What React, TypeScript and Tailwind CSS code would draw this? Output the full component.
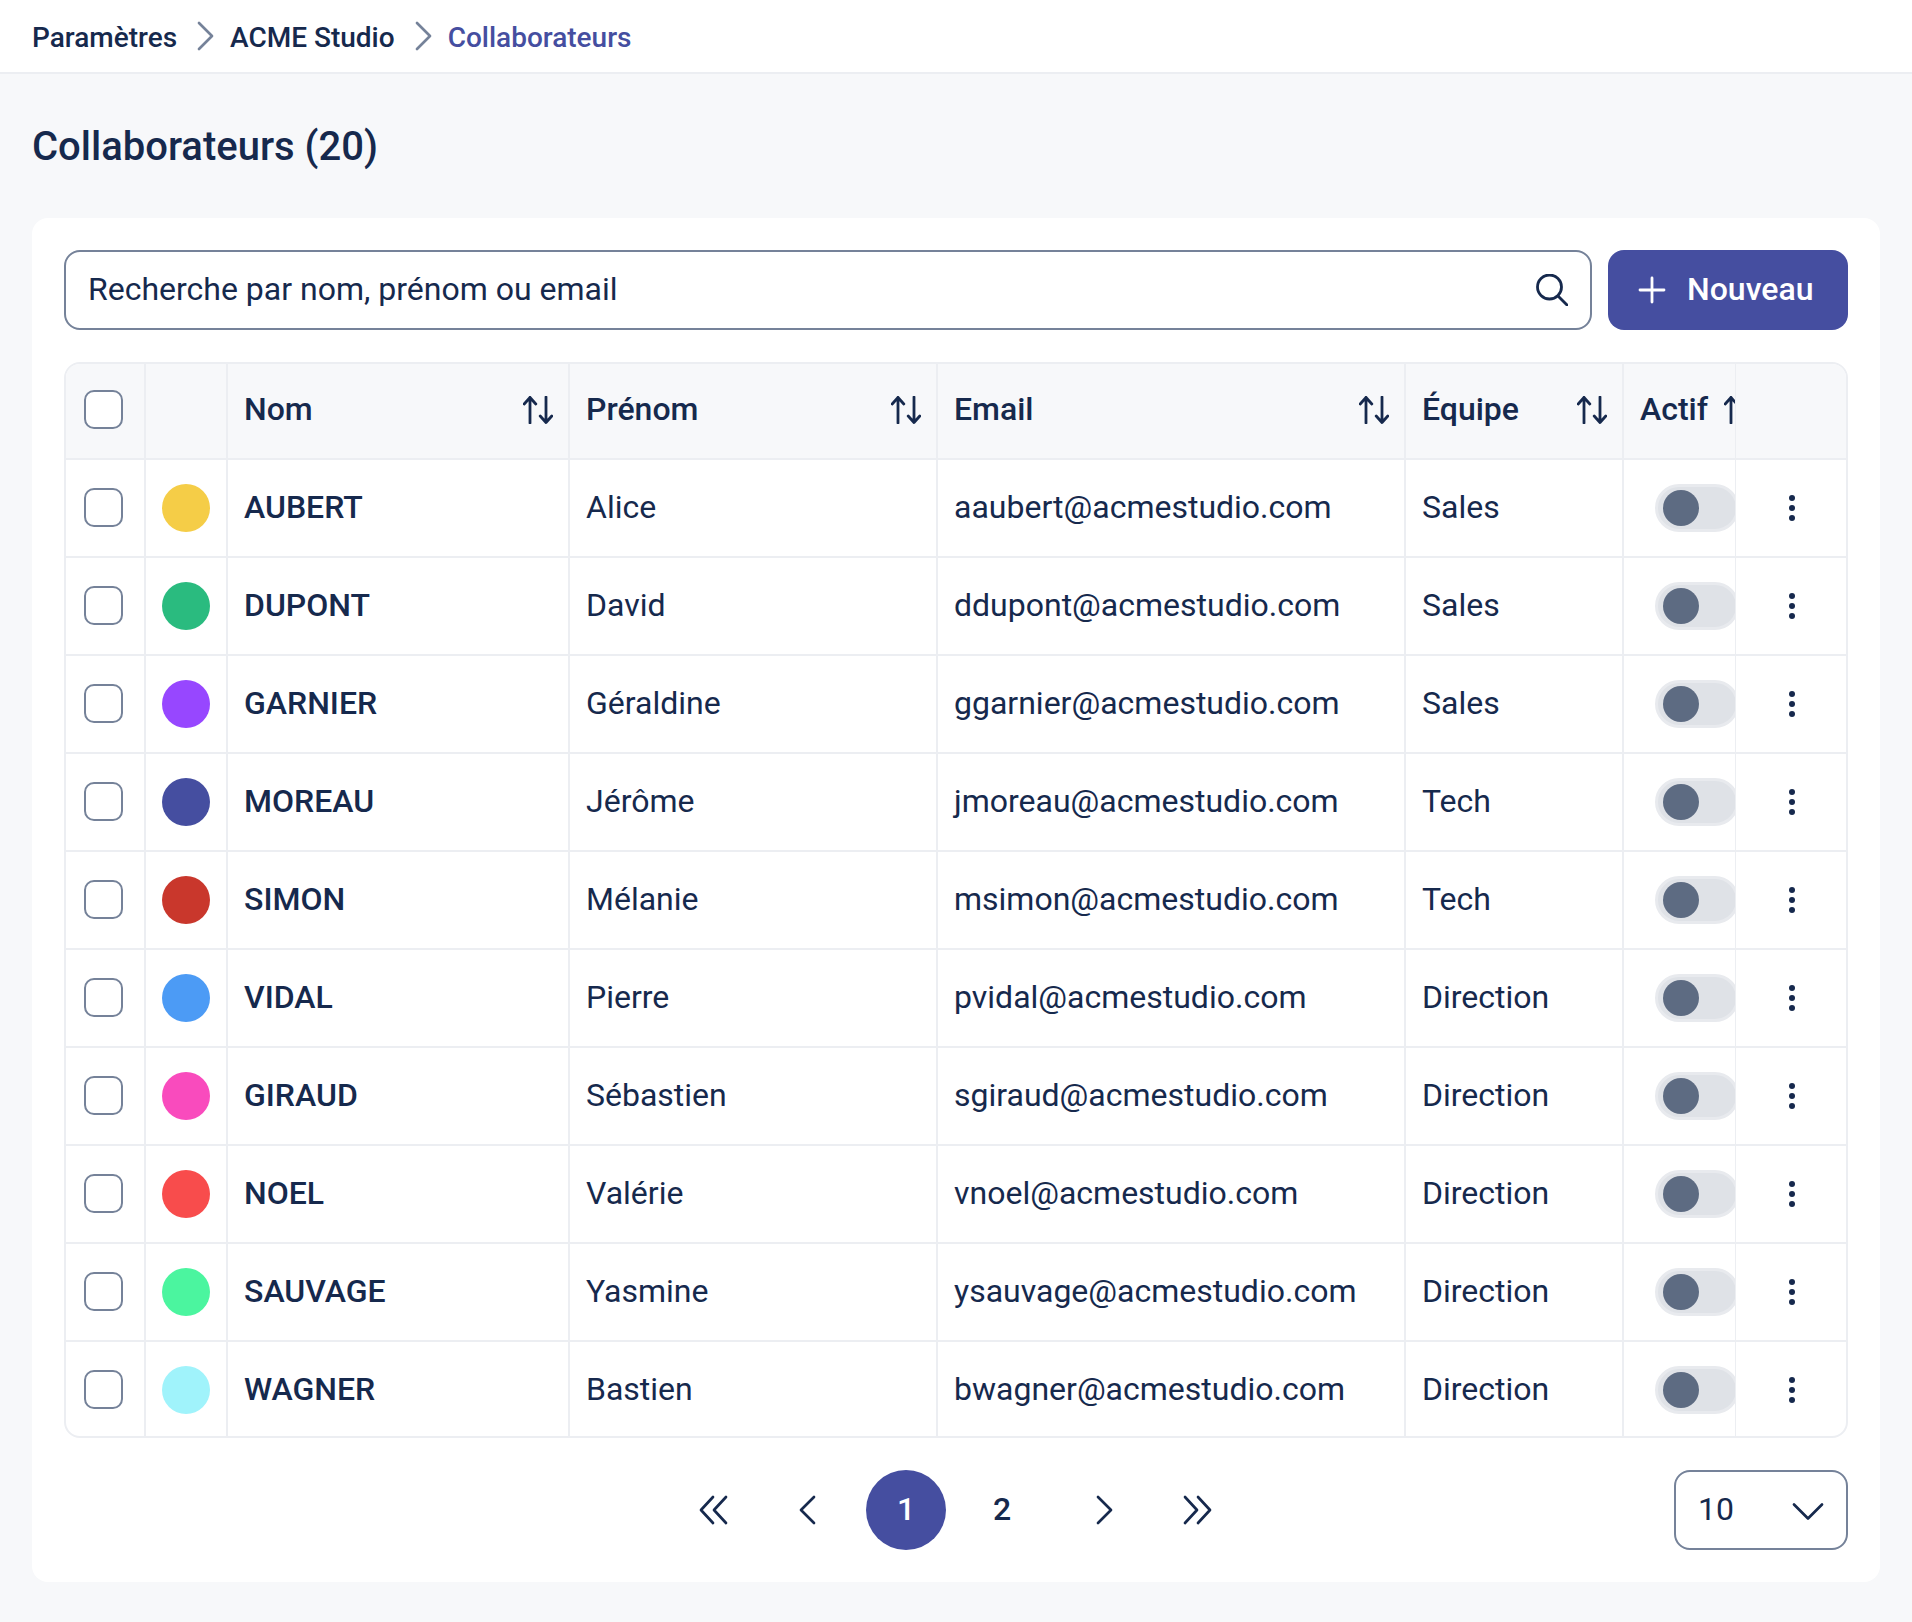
type Member = {
  nom: string;
  prenom: string;
  email: string;
  equipe: string;
  color: string;
};

const members: Member[] = [
  { nom: "AUBERT", prenom: "Alice", email: "aaubert@acmestudio.com", equipe: "Sales", color: "bg-[#f5cd47]" },
  { nom: "DUPONT", prenom: "David", email: "ddupont@acmestudio.com", equipe: "Sales", color: "bg-[#2abb7f]" },
  { nom: "GARNIER", prenom: "Géraldine", email: "ggarnier@acmestudio.com", equipe: "Sales", color: "bg-[#9747ff]" },
  { nom: "MOREAU", prenom: "Jérôme", email: "jmoreau@acmestudio.com", equipe: "Tech", color: "bg-[#454ea0]" },
  { nom: "SIMON", prenom: "Mélanie", email: "msimon@acmestudio.com", equipe: "Tech", color: "bg-[#c9372c]" },
  { nom: "VIDAL", prenom: "Pierre", email: "pvidal@acmestudio.com", equipe: "Direction", color: "bg-[#4c9bf5]" },
  { nom: "GIRAUD", prenom: "Sébastien", email: "sgiraud@acmestudio.com", equipe: "Direction", color: "bg-[#f94bbd]" },
  { nom: "NOEL", prenom: "Valérie", email: "vnoel@acmestudio.com", equipe: "Direction", color: "bg-[#f84c4c]" },
  { nom: "SAUVAGE", prenom: "Yasmine", email: "ysauvage@acmestudio.com", equipe: "Direction", color: "bg-[#4bf59f]" },
  { nom: "WAGNER", prenom: "Bastien", email: "bwagner@acmestudio.com", equipe: "Direction", color: "bg-[#a0f3fb]" },
];

const gridCols = "grid grid-cols-[80px_82px_342px_368px_468px_218px_112px_1fr]";
const cellBorder = "border-r-2 border-[#eceef2]";

function Chevron({ className, d }: { className: string; d: string }) {
  return (
    <svg viewBox="0 0 32 32" fill="none" stroke="currentColor" strokeWidth="2.7" strokeLinecap="round" strokeLinejoin="round" className={`overflow-visible ${className}`}>
      <path d={d} />
    </svg>
  );
}

function SortIcon() {
  return (
    <svg viewBox="0 0 30 28" fill="none" stroke="currentColor" strokeWidth="2.8" strokeLinecap="round" strokeLinejoin="round" className="h-7 w-[30px] shrink-0">
      <path d="M7 27V1.5M1.2 8L7 1.5 12.8 8" />
      <path d="M23 1v25.5M17.2 20l5.8 6.5 5.8-6.5" />
    </svg>
  );
}

function HeaderCell({ label }: { label: string }) {
  return (
    <div className={`flex items-center justify-between pb-[3px] pl-4 pr-[15px] ${cellBorder}`}>
      <span className="pb-px">{label}</span>
      <SortIcon />
    </div>
  );
}

function Checkbox() {
  return <input type="checkbox" className="h-[39px] w-[39px] appearance-none rounded-[10px] border-2 border-[#758299] bg-white" />;
}

function Row({ member, last }: { member: Member; last: boolean }) {
  return (
    <div className={`${gridCols} ${last ? "h-[96px]" : "h-[98px] border-b-2 border-[#eceef2]"} text-[32px]`}>
      <div className={`flex items-center justify-center pb-[2px] pr-[3px] ${cellBorder}`}>
        <Checkbox />
      </div>
      <div className={`flex items-center justify-center ${cellBorder}`}>
        <span className={`h-12 w-12 rounded-full ${member.color}`} />
      </div>
      <div className={`flex items-center px-4 pb-[2px] font-medium ${cellBorder}`}>{member.nom}</div>
      <div className={`flex items-center px-4 pb-[2px] ${cellBorder}`}>{member.prenom}</div>
      <div className={`flex items-center px-4 pb-[2px] ${cellBorder}`}>{member.email}</div>
      <div className={`flex items-center px-4 pb-[2px] ${cellBorder}`}>{member.equipe}</div>
      <div className="flex items-center overflow-hidden border-r border-[#eceef2] pl-[31px]">
        <span className="flex h-12 w-[84px] shrink-0 items-center rounded-full border-[3px] border-[#e8eaee] bg-[#dfe2e7] pl-[5px]">
          <span className="h-9 w-9 rounded-full bg-[#5d6b82]" />
        </span>
      </div>
      <div className="flex items-center justify-center pl-[2px]">
        <span className="flex flex-col gap-1">
          <span className="h-[6px] w-[6px] rounded-full bg-[#16294d]" />
          <span className="h-[6px] w-[6px] rounded-full bg-[#16294d]" />
          <span className="h-[6px] w-[6px] rounded-full bg-[#16294d]" />
        </span>
      </div>
    </div>
  );
}

export default function App() {
  return (
    <div className="min-h-[1622px] bg-[#f7f8fa] font-['Roboto',sans-serif] text-[#16294d]">
      <header className="flex h-[74px] items-center border-b-2 border-[#eceef2] bg-white px-8 pt-1 text-[28px] font-medium">
        <span>Paramètres</span>
        <Chevron className="ml-3 mr-[9px] h-8 w-8 text-[#758299]" d="M10 1l13 13-13 13" />
        <span>ACME Studio</span>
        <Chevron className="ml-3 mr-[9px] h-8 w-8 text-[#758299]" d="M10 1l13 13-13 13" />
        <span className="text-[#454ea0]">Collaborateurs</span>
      </header>

      <main className="px-8 pb-10">
        <h1 className="mb-[47px] mt-[49px] h-12 text-[40px] font-medium leading-[48px]">Collaborateurs (20)</h1>

        <section className="rounded-2xl bg-white px-8 py-8">
          <div className="flex gap-4">
            <div className="flex h-20 flex-1 items-center rounded-2xl border-2 border-[#758299] pl-[22px] pr-[22px]">
              <input
                className="mb-[2px] w-full bg-transparent text-[32px] outline-none placeholder:text-[#16294d]"
                placeholder="Recherche par nom, prénom ou email"
              />
              <svg viewBox="0 0 32 32" fill="none" stroke="currentColor" strokeWidth="2.8" strokeLinecap="round" className="h-8 w-8 shrink-0">
                <circle cx="13.5" cy="13" r="12" />
                <path d="M22 22l9 9" />
              </svg>
            </div>
            <button className="flex h-20 w-[240px] items-center gap-[21px] rounded-2xl bg-[#454ea0] pl-[30px] text-[32px] font-medium text-white">
              <svg viewBox="0 0 28 28" fill="none" stroke="currentColor" strokeWidth="2.8" strokeLinecap="round" className="h-7 w-7 shrink-0">
                <path d="M14 2v24M2 14h24" />
              </svg>
              <span className="pb-[2px]">Nouveau</span>
            </button>
          </div>

          <div className="mt-8 h-[1076px] overflow-hidden rounded-2xl border-2 border-[#eceef2]">
            <div className={`${gridCols} h-[96px] border-b-2 border-[#eceef2] bg-[#f7f8fa] text-[32px] font-medium`}>
              <div className={`flex items-center justify-center pb-[3px] pr-[3px] ${cellBorder}`}>
                <Checkbox />
              </div>
              <div className={cellBorder} />
              <HeaderCell label="Nom" />
              <HeaderCell label="Prénom" />
              <HeaderCell label="Email" />
              <HeaderCell label="Équipe" />
              <div className="flex items-center gap-4 overflow-hidden border-r border-[#eceef2] pb-[3px] pl-4">
                <span className="pb-px">Actif</span>
                <SortIcon />
              </div>
              <div />
            </div>
            {members.map((member, i) => (
              <Row key={member.nom} member={member} last={i === members.length - 1} />
            ))}
          </div>

          <div className="relative mt-8 flex h-20 justify-center pr-[4px]">
            <div className="flex items-center gap-4 text-[32px] font-medium">
              <button className="flex h-20 w-20 items-center justify-center">
                <Chevron className="h-8 w-8" d="M15 3L3 16l12 13M28 3L16 16l12 13" />
              </button>
              <button className="flex h-20 w-20 items-center justify-center">
                <Chevron className="h-8 w-8" d="M20 3L7 16l13 13" />
              </button>
              <button className="flex h-20 w-20 items-center justify-center rounded-full bg-[#454ea0] pb-[2px] text-white">1</button>
              <button className="flex h-20 w-20 items-center justify-center pb-[2px]">2</button>
              <button className="flex h-20 w-20 items-center justify-center">
                <Chevron className="h-8 w-8" d="M16 3l13 13-13 13" />
              </button>
              <button className="flex h-20 w-20 items-center justify-center">
                <Chevron className="h-8 w-8" d="M7 3l12 13L7 29M20 3l12 13-12 13" />
              </button>
            </div>
            <div className="absolute right-0 top-0 flex h-20 w-[174px] items-center justify-between rounded-2xl border-2 border-[#758299] pl-[22px] pr-6 text-[32px]">
              <span className="pb-[2px]">10</span>
              <Chevron className="h-8 w-8" d="M4 10.5l14 14 14-14" />
            </div>
          </div>
        </section>
      </main>
    </div>
  );
}
